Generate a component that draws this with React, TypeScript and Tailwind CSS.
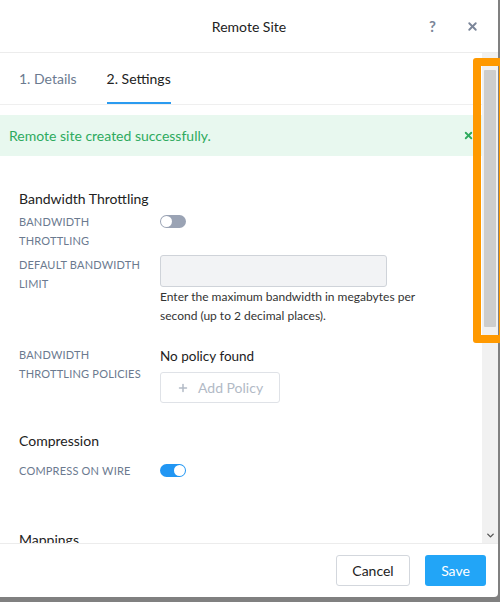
import { X, Plus, ChevronDown } from "lucide-react";

type FieldRowProps = {
  label: string[];
  className?: string;
  children: React.ReactNode;
};

function FieldRow({ label, className = "", children }: FieldRowProps) {
  return (
    <div className={`flex ${className}`}>
      <div className="w-[141px] shrink-0 text-[11px] leading-[19px] tracking-[0.2px] text-[#6b7a8f]">
        {label.map((line) => (
          <div key={line}>{line}</div>
        ))}
      </div>
      <div className="flex-1">{children}</div>
    </div>
  );
}

function Toggle({ on }: { on: boolean }) {
  return (
    <div
      className={`flex h-[13px] w-[26px] items-center rounded-full px-[1px] ${
        on ? "justify-end bg-[#2196f3]" : "justify-start bg-[#9aa3b4]"
      }`}
    >
      <div className="h-[11px] w-[11px] rounded-full bg-white" />
    </div>
  );
}

export default function App() {
  return (
    <div
      className="relative h-[602px] w-[500px] overflow-hidden bg-[#808080]"
      style={{ fontFamily: "Lato, 'Liberation Sans', sans-serif" }}
    >
      <div className="flex h-[597px] w-[498px] flex-col rounded-br-[4px] bg-white text-[#222]">
        {/* header */}
        <div className="flex h-[53px] shrink-0 items-center border-b border-[#ececec]">
          <div className="w-[80px]" />
          <div className="flex-1 text-center text-[14px]">Remote Site</div>
          <div className="flex w-[80px] items-center justify-end gap-[30px] pr-[19px]">
            <span className="text-[15px] font-bold text-[#7b8699]">?</span>
            <X className="h-[13px] w-[13px] text-[#7b8699]" strokeWidth={3.5} />
          </div>
        </div>

        {/* body */}
        <div className="flex min-h-0 flex-1">
          <div className="min-w-0 flex-1 overflow-hidden">
            <div className="flex h-[52px] items-stretch gap-[30px] border-b border-[#efefef] pl-[19px] text-[14px]">
              <div className="flex items-center text-[#6b7a8f]">1. Details</div>
              <div className="flex items-center border-b-2 border-[#2b9bf0] pt-[2px] text-[#222]">
                2. Settings
              </div>
            </div>

            <div className="mt-[10px] flex h-[41px] items-center justify-between bg-[#e8f8ef] pl-[9px] pr-[8px]">
              <span className="text-[14px] text-[#2eaa5e]">Remote site created successfully.</span>
              <X className="h-[11px] w-[11px] text-[#2eaa5e]" strokeWidth={4} />
            </div>

            <div className="px-[19px]">
              <div className="mt-[33px] text-[14px] leading-[20px]">Bandwidth Throttling</div>

              <FieldRow label={["BANDWIDTH", "THROTTLING"]} className="mt-[3px]">
                <div className="pt-[3px]">
                  <Toggle on={false} />
                </div>
              </FieldRow>

              <FieldRow label={["DEFAULT BANDWIDTH", "LIMIT"]} className="mt-[5px]">
                <div className="h-[32px] w-[227px] rounded-[3px] border border-[#cfd3d9] bg-[#f2f3f5]" />
                <p className="text-[12px] leading-[19px] text-[#333]">
                  Enter the maximum bandwidth in megabytes per
                  <br />
                  second (up to 2 decimal places).
                </p>
              </FieldRow>

              <FieldRow label={["BANDWIDTH", "THROTTLING POLICIES"]} className="mt-[20px]">
                <div className="text-[13.5px] leading-[23px]">No policy found</div>
                <div className="mt-[4px] flex h-[31px] w-[120px] items-center gap-[9px] rounded-[3px] border border-[#dfe2e7] pl-[16px] text-[14px] text-[#b2bac6]">
                  <Plus className="h-[12px] w-[12px]" strokeWidth={3} />
                  Add Policy
                </div>
              </FieldRow>

              <div className="mt-[28px] text-[14px] leading-[20px]">Compression</div>

              <FieldRow label={["COMPRESS ON WIRE"]} className="mt-[10px]">
                <div className="pt-[3px]">
                  <Toggle on />
                </div>
              </FieldRow>

              <div className="mt-[50px] text-[14px] leading-[20px]">Mappings</div>
            </div>
          </div>

          {/* scrollbar */}
          <div className="flex w-[16px] shrink-0 flex-col bg-[#f1f1f1] pt-[17px] pb-[2px]">
            <div className="mx-[2px] h-[257px] rounded-[1px] bg-[#cdcdcd]" />
            <div className="flex-1" />
            <ChevronDown className="mx-auto h-[11px] w-[11px] text-[#555]" strokeWidth={3} />
          </div>
        </div>

        {/* footer */}
        <div className="flex h-[54px] shrink-0 items-center justify-end gap-[15px] border-t border-[#ececec] pr-[12px]">
          <button className="h-[31px] w-[74px] rounded-[3px] border border-[#d3d7dd] bg-white text-[14px] text-[#222]">
            Cancel
          </button>
          <button className="h-[31px] w-[61px] rounded-[3px] bg-[#22a5f7] text-[14px] text-white">
            Save
          </button>
        </div>
      </div>

      {/* highlight box over the scrollbar */}
      <div className="absolute left-[473px] top-[58px] h-[285px] w-[34px] rounded-[3px] border-[8px] border-[#ff9900]" />
    </div>
  );
}
